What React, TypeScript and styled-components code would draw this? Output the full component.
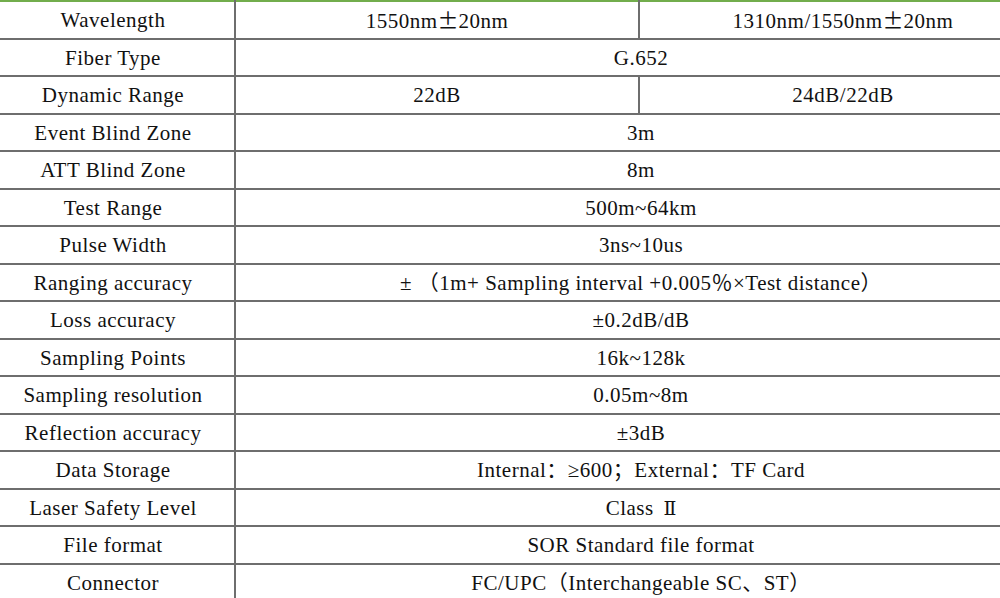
import React from "react";
import styled, { createGlobalStyle } from "styled-components";

const Global = createGlobalStyle`
  html, body {
    margin: 0;
    padding: 0;
    background: #ffffff;
    overflow: hidden;
  }
`;

type Row = {
  label: string;
  values: React.ReactNode[];
};

const Wide = styled.span`
  font-family: "Noto Sans CJK SC", sans-serif;
  letter-spacing: 0;
`;

const Roman = styled.span`
  font-family: "DejaVu Serif", "Liberation Serif", serif;
  font-size: 19px;
  letter-spacing: 0;
  margin-left: 4px;
`;

const rows: Row[] = [
  {
    label: "Wavelength",
    values: [
      <>1550nm<Wide>±</Wide>20nm</>,
      <>1310nm/1550nm<Wide>±</Wide>20nm</>,
    ],
  },
  { label: "Fiber Type", values: ["G.652"] },
  { label: "Dynamic Range", values: ["22dB", "24dB/22dB"] },
  { label: "Event Blind Zone", values: ["3m"] },
  { label: "ATT Blind Zone", values: ["8m"] },
  { label: "Test Range", values: ["500m~64km"] },
  { label: "Pulse Width", values: ["3ns~10us"] },
  {
    label: "Ranging accuracy",
    values: ["± （1m+ Sampling interval +0.005％×Test distance）"],
  },
  { label: "Loss accuracy", values: ["±0.2dB/dB"] },
  { label: "Sampling Points", values: ["16k~128k"] },
  { label: "Sampling resolution", values: ["0.05m~8m"] },
  { label: "Reflection accuracy", values: ["±3dB"] },
  { label: "Data Storage", values: ["Internal：≥600；External：TF Card"] },
  { label: "Laser Safety Level", values: [<>Class <Roman>Ⅱ</Roman></>] },
  { label: "File format", values: ["SOR Standard file format"] },
  { label: "Connector", values: ["FC/UPC（Interchangeable SC、ST）"] },
];

const Page = styled.div`
  width: 1000px;
  height: 598px;
  overflow: hidden;
`;

const Table = styled.table`
  margin-left: -8px;
  width: 1054px;
  border-collapse: collapse;
  table-layout: fixed;
  border-top: 2px solid #72ad4c;
  font-family: "Liberation Serif", "Noto Sans CJK SC", serif;
  font-size: 21px;
  letter-spacing: 0.5px;
  color: #111111;
`;

const Tr = styled.tr`
  height: 37.5px;
  border-bottom: 2px solid #6e6e6e;
`;

const Cell = styled.td<{ $first?: boolean }>`
  padding: 2px 0 0;
  text-align: center;
  vertical-align: middle;
  white-space: nowrap;
  line-height: 1;
  border-right: ${(p) => (p.$first ? "2px solid #6e6e6e" : "none")};
`;

const SplitCell = styled(Cell)`
  border-right: 2px solid #6e6e6e;
`;

export default function App() {
  return (
    <Page>
      <Global />
      <Table>
        <colgroup>
          <col style={{ width: 243 }} />
          <col style={{ width: 404 }} />
          <col />
        </colgroup>
        <tbody>
          {rows.map((r) => (
            <Tr key={r.label}>
              <Cell $first>{r.label}</Cell>
              {r.values.length === 2 ? (
                <>
                  <SplitCell>{r.values[0]}</SplitCell>
                  <Cell>{r.values[1]}</Cell>
                </>
              ) : (
                <Cell colSpan={2}>{r.values[0]}</Cell>
              )}
            </Tr>
          ))}
        </tbody>
      </Table>
    </Page>
  );
}
